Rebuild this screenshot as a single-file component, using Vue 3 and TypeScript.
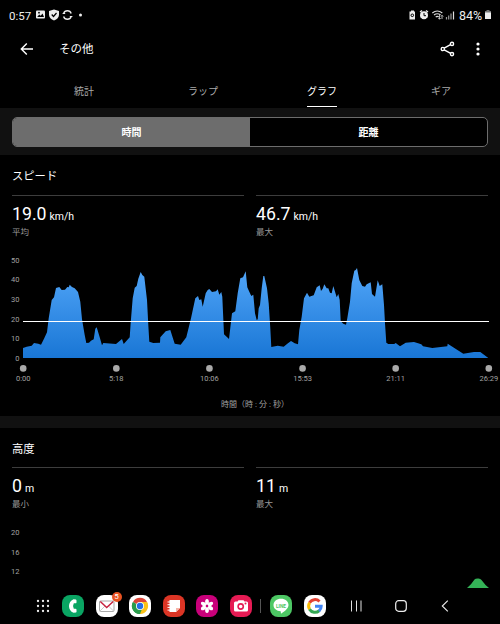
<template>
  <div class="screen">
    <header class="status-bar">
      <span class="clock">0:57</span>
      <svg class="status-left" width="52" height="12" viewBox="0 0 52 12">
        <rect x="0" y="1.5" width="9" height="8" rx="1" fill="#eee" />
        <path d="M1.2 8l2-2.5 1.5 1.3L6.500 4.500 8 8z" fill="#000" />
        <circle cx="3" cy="3.700" r=".9" fill="#000" />
        <path d="M18 .6l5 1.500v3.600c0 2.700-2 4.500-5 5.700-3-1.200-5-3-5-5.700V2.100z" fill="#eee" />
        <path d="M15.700 5.500l1.800 2 3-3.500" fill="none" stroke="#000" stroke-width="1.200" />
        <path d="M27.600 4.500a4 4 0 0 1 7.600 0M35.200 7.500a4 4 0 0 1-7.600 0" fill="none" stroke="#eee" stroke-width="1.300" />
        <path d="M26.600 4.500h2.600M33.800 7.500h2.600" stroke="#eee" stroke-width="1" />
        <circle cx="44.500" cy="6" r="1.500" fill="#eee" />
      </svg>
      <svg class="status-right" width="46" height="12" viewBox="0 0 46 12">
        <path d="M2 1.500h3v1h1v8H.500v-8H2z" fill="#eee" />
        <circle cx="3.300" cy="6.300" r="1.300" fill="none" stroke="#000" />
        <path d="M11 3l2-1.500M19 3l-2-1.500" stroke="#eee" stroke-width="1.300" />
        <circle cx="15" cy="6.300" r="4" fill="#eee" />
        <path d="M15 4v2.700h2M11.500 10.500l1-1M18.500 10.500l-1-1" fill="none" stroke="#000" />
        <path d="M23.300 4q5-4 10 0M25 6q3.300-2.600 6.600 0M26.700 8q1.600-1.300 3 0" fill="none" stroke="#ddd" stroke-width="1.100" />
        <path d="M30.500 6v4M29.300 9l1.200 1.300L31.700 9M33 10V6.500M31.900 7.500L33 6.300l1.200 1.200" fill="none" stroke="#ddd" stroke-width=".8" />
        <path d="M37.500 8v2.500M39.700 6.500v4M42 4.500v6" stroke="#999" stroke-width="1.200" />
        <path d="M44.500 2.500v8" stroke="#ddd" stroke-width="1.200" />
      </svg>
      <span class="percent">84%</span>
      <svg class="battery" width="6" height="10" viewBox="0 0 6 10">
        <path d="M1.500 0h3v1H6v2H0V1h1.500z" fill="#777" />
        <path d="M0 2.500h6V9H0z" fill="#eee" />
      </svg>
    </header>

    <div class="app-bar">
      <svg width="14" height="14" viewBox="0 0 14 14" fill="none" stroke="#fff" stroke-width="1.400">
        <path d="M13 7H1.700M6.800 1.500L1.300 7l5.500 5.500" />
      </svg>
      <h1>その他</h1>
      <svg class="share" width="16" height="16" viewBox="0 0 16 16" fill="none" stroke="#fff" stroke-width="1.400">
        <path d="M4.200 7.200L10.500 3.700M4.200 8.800l6.500 3.600" />
        <circle cx="2.800" cy="8" r="1.600" />
        <circle cx="12" cy="2.900" r="1.600" />
        <circle cx="12" cy="13.100" r="1.600" />
      </svg>
      <svg width="4" height="14" viewBox="0 0 4 14" fill="#fff">
        <circle cx="2" cy="2" r="1.600" /><circle cx="2" cy="7" r="1.600" /><circle cx="2" cy="12" r="1.600" />
      </svg>
    </div>

    <nav class="tabs">
      <button v-for="tab in tabs" :key="tab" :class="{ active: tab === activeTab }" @click="activeTab = tab">
        <span>{{ tab }}</span>
      </button>
    </nav>

    <div class="mode-band">
      <div class="segmented">
        <button v-for="mode in modes" :key="mode" :class="{ selected: mode === activeMode }" @click="activeMode = mode">
          {{ mode }}
        </button>
      </div>
    </div>

    <section v-for="metric in metrics" :key="metric.title" class="metric" :class="metric.kind">
      <h2>{{ metric.title }}</h2>
      <div class="stats">
        <div v-for="stat in metric.stats" :key="stat.label" class="stat">
          <p class="reading">{{ stat.value }}<small>{{ metric.unit }}</small></p>
          <p class="label">{{ stat.label }}</p>
        </div>
      </div>

      <svg v-if="metric.kind === 'speed'" class="chart" width="500" height="166" viewBox="0 0 500 166">
        <defs>
          <linearGradient id="speed-fill" x1="0" y1="18" x2="0" y2="108" gradientUnits="userSpaceOnUse">
            <stop offset="0" stop-color="#51a5f8" />
            <stop offset="1" stop-color="#1976d5" />
          </linearGradient>
        </defs>
        <path :d="speedPath" fill="url(#speed-fill)" />
        <path d="M23 71.500h466" stroke="#fff" />
        <text v-for="(n, i) in [50, 40, 30, 20, 10, 0]" :key="n" x="19.500" :y="12.800 + i * 19.600" text-anchor="end">{{ n }}</text>
        <g v-for="(time, i) in times" :key="time">
          <circle :cx="23.200 + i * 93.120" cy="118.400" r="3.300" fill="#aaa" />
          <text :x="23.200 + i * 93.120" y="130.800" text-anchor="middle">{{ time }}</text>
        </g>
        <text class="axis-title" x="255" y="157" text-anchor="middle">時間（時 : 分 : 秒）</text>
      </svg>

      <svg v-else class="chart" width="500" height="66" viewBox="0 0 500 66">
        <path d="M467 66q4-3 7.500-8.500 1-1.200 4-1 2 0 3 1.500Q485 63 489 66z" fill="#34b257" />
        <text v-for="(n, i) in [20, 16, 12]" :key="n" x="19.500" :y="13 + i * 19.600" text-anchor="end">{{ n }}</text>
      </svg>
    </section>

    <footer class="dock">
      <svg class="apps" width="14" height="14" viewBox="0 0 14 14" fill="#eee">
        <template v-for="row in 3" :key="row">
          <circle v-for="col in 3" :key="col" :cx="col * 5 - 3" :cy="row * 5 - 3" r="1.150" />
        </template>
      </svg>
      <div class="app phone">
        <svg viewBox="0 0 22 22">
          <path d="M11.500 4.200l2.500.2q.8.500.5 3-.2.900-1 .900h-1.700q-1.500 2.700 0 5.400h1.700q.8 0 1 .9.300 2.500-.5 3l-2.500.2C5.500 15.500 5.500 6.500 11.500 4.200z" fill="#fff" />
        </svg>
      </div>
      <div class="app mail">
        <svg viewBox="0 0 22 22" fill="none">
          <rect x="3.500" y="6" width="14.500" height="10.500" rx="1" stroke="#aaa" />
          <path d="M4 16l5-5M17.500 16l-5-5" stroke="#bbb" stroke-width=".8" />
          <path d="M4.300 6.500l6.400 6 6.500-6" stroke="#c7213e" stroke-width="1.400" />
        </svg>
        <span class="badge">5</span>
      </div>
      <div class="app chrome">
        <svg viewBox="0 0 22 22">
          <path d="M11 11L4 7A8 8 0 0 1 18 7z" fill="#dc4437" />
          <path d="M11 11L18 7a8 8 0 0 1-7 12z" fill="#fbc116" />
          <path d="M11 11v8A8 8 0 0 1 4 7z" fill="#2a9b4b" />
          <path d="M11 7h7l.6 1.500L14 13l-3 6-2-4z" fill="#fbc116" />
          <path d="M4 7l4 6 5 1-2 5A8 8 0 0 1 4 7z" fill="#2a9b4b" />
          <circle cx="11" cy="11" r="4" fill="#fff" />
          <circle cx="11" cy="11" r="3.200" fill="#246ee5" />
        </svg>
      </div>
      <div class="app notes">
        <svg viewBox="0 0 22 22">
          <path d="M6.500 5H17v8l-4 4H6.500z" fill="#fff" />
          <path d="M17 13h-4v4" fill="#f5b5a9" />
          <path d="M4.500 7h3M4.500 9.700h3M4.500 12.400h3M4.500 15.100h3" stroke="#fff" stroke-width="1" />
        </svg>
      </div>
      <div class="app gallery">
        <svg viewBox="0 0 22 22" fill="#fff">
          <ellipse v-for="n in 6" :key="n" cx="11" cy="7" rx="1.900" ry="2.900" :transform="`rotate(${n * 60} 11 11)`" />
          <circle cx="11" cy="11" r="1.200" fill="#c9007a" />
        </svg>
      </div>
      <div class="app camera">
        <svg viewBox="0 0 22 22">
          <path d="M5.500 6.500h2l1-1.300h5l1 1.300h2q1.500 0 1.500 1.500v7q0 1.500-1.500 1.500h-11Q4 16.500 4 15V8q0-1.500 1.500-1.500z" fill="#fff" />
          <circle cx="10.700" cy="11.500" r="2.600" fill="none" stroke="#e61b54" stroke-width="1.600" />
          <circle cx="15.500" cy="8.500" r="1" fill="#e61b54" />
        </svg>
      </div>
      <i class="divider"></i>
      <div class="app line">
        <svg viewBox="0 0 22 22">
          <path d="M11 3.800c4.300 0 7.500 2.700 7.500 6.200 0 3-2.800 5.700-7.500 8.700l-.3-2.500C6.500 16 3.500 13.500 3.500 10S6.700 3.800 11 3.800z" fill="#fff" />
          <text x="11" y="12.600" text-anchor="middle">LINE</text>
        </svg>
      </div>
      <div class="app google">
        <svg viewBox="0 0 22 22" fill="none" stroke-width="3">
          <path d="M5.500 7.800A6.300 6.300 0 0 1 15.500 6.500" stroke="#e34133" />
          <path d="M5.600 14.300a6.300 6.300 0 0 1 0-6.600" stroke="#fbbc05" />
          <path d="M15.300 15.600a6.300 6.300 0 0 1-9.800-1.400" stroke="#34a853" />
          <path d="M11 11.300h6.200a6.300 6.300 0 0 1-2.200 4.700" stroke="#4285f4" />
        </svg>
      </div>
      <svg class="recents" width="12" height="12" viewBox="0 0 12 12">
        <path d="M1.500 .500v11M6.500 .500v11" stroke="#ddd" />
        <path d="M11 .500v11" stroke="#999" stroke-width="1.500" />
      </svg>
      <svg class="home" width="12" height="12" viewBox="0 0 12 12">
        <rect x=".7" y=".7" width="10.600" height="10.600" rx="3" fill="none" stroke="#eee" stroke-width="1.200" />
      </svg>
      <svg class="back" width="8" height="12" viewBox="0 0 8 12">
        <path d="M6.800 .700L1.300 6l5.500 5.300" fill="none" stroke="#eee" stroke-width="1.100" />
      </svg>
    </footer>
  </div>
</template>

<script setup lang="ts">
import { computed, ref } from 'vue';

interface Metric {
  kind: 'speed' | 'altitude';
  title: string;
  unit: string;
  stats: { value: string; label: string }[];
}

const tabs = ['統計', 'ラップ', 'グラフ', 'ギア'];
const activeTab = ref('グラフ');

const modes = ['時間', '距離'];
const activeMode = ref('時間');

const metrics: Metric[] = [
  {
    kind: 'speed',
    title: 'スピード',
    unit: 'km/h',
    stats: [
      { value: '19.0', label: '平均' },
      { value: '46.7', label: '最大' }
    ]
  },
  {
    kind: 'altitude',
    title: '高度',
    unit: 'm',
    stats: [
      { value: '0', label: '最小' },
      { value: '11', label: '最大' }
    ]
  }
];

const times = ['0:00', '5:18', '10:06', '15:53', '21:11', '26:29'];

// x, y in thirds of a pixel
const speedPoints: [number, number][] = [
  [69, 294], [80, 290], [95, 287], [102, 279], [115, 281], [123, 284], [132, 266], [141, 247],
  [146, 205], [155, 150], [162, 142], [168, 114], [178, 111], [185, 120], [195, 119], [202, 111],
  [206, 112], [209, 104], [216, 111], [224, 115], [234, 126], [241, 155], [246, 208], [254, 255],
  [259, 279], [267, 278], [273, 272], [281, 268], [286, 236], [290, 232], [299, 262], [306, 286],
  [310, 279], [348, 282], [366, 267], [371, 282], [389, 262], [392, 218], [398, 145], [404, 113],
  [410, 108], [415, 86], [422, 66], [427, 75], [433, 80], [441, 150], [445, 225], [448, 275],
  [460, 279], [480, 278], [481, 262], [497, 244], [511, 240], [524, 281], [542, 284], [559, 262],
  [573, 205], [586, 145], [594, 138], [598, 150], [604, 148], [608, 170], [617, 130], [623, 120],
  [628, 117], [636, 126], [648, 124], [653, 118], [658, 134], [664, 126], [667, 140], [672, 253],
  [687, 267], [696, 190], [706, 184], [713, 130], [721, 85], [729, 82], [737, 64], [742, 112],
  [748, 125], [754, 138], [760, 134], [765, 190], [770, 210], [773, 208], [776, 175], [780, 165],
  [785, 115], [790, 78], [793, 78], [801, 115], [806, 160], [811, 235], [814, 291], [833, 287],
  [851, 290], [862, 281], [873, 273], [884, 280], [894, 283], [898, 240], [905, 200], [912, 145],
  [921, 128], [928, 140], [941, 136], [950, 112], [959, 106], [963, 123], [968, 116], [973, 103],
  [980, 115], [985, 115], [990, 128], [995, 130], [1000, 108], [1010, 142], [1015, 132], [1019, 150],
  [1022, 214], [1030, 221], [1038, 224], [1042, 205], [1050, 155], [1055, 100], [1063, 62], [1067, 60],
  [1071, 54], [1078, 90], [1087, 108], [1095, 110], [1100, 103], [1112, 97], [1116, 132], [1125, 140],
  [1133, 91], [1139, 108], [1147, 103], [1152, 165], [1155, 220], [1159, 278], [1165, 282], [1183, 282],
  [1187, 279], [1200, 289], [1217, 278], [1242, 276], [1264, 283], [1269, 289], [1297, 294], [1342, 289],
  [1343, 281], [1390, 311], [1422, 306], [1441, 306], [1464, 323]
];

const speedPath = computed(() => {
  const line = speedPoints.map(([x, y]) => `${(x / 3).toFixed(1)} ${(y / 3).toFixed(1)}`).join('L');
  return `M23 108L${line}V108Z`;
});
</script>

<style>
body {
  margin: 0;
  background: #000;
}
</style>

<style scoped>
.screen {
  width: 500px;
  height: 624px;
  display: flex;
  flex-direction: column;
  overflow: hidden;
  background: #000;
  color: #fff;
  font-family: Roboto, 'Noto Sans CJK JP', sans-serif;
}

.screen svg {
  display: block;
  flex: none;
}

h1, h2, p {
  margin: 0;
  font-weight: 400;
}

button {
  border: 0;
  padding: 0;
  background: none;
  color: inherit;
  font: inherit;
}

.status-bar {
  height: 30px;
  flex: none;
  display: flex;
  align-items: center;
  padding: 0 9px;
  color: #eee;
}

.clock {
  width: 27px;
  font-size: 11.5px;
  line-height: 16px;
  padding-top: 1px;
}

.status-right {
  margin-left: auto;
}

.percent {
  width: 25px;
  margin-left: 4px;
  padding-top: 1px;
  font-size: 12.5px;
  line-height: 16px;
}

.battery {
  margin-left: 1px;
}

.app-bar {
  height: 37px;
  flex: none;
  display: flex;
  align-items: center;
  padding: 0 20px;
}

.app-bar h1 {
  margin-left: 25px;
  padding-top: 1px;
  font-size: 11.5px;
  line-height: 20px;
}

.share {
  margin-left: auto;
  margin-right: 20px;
}

.tabs {
  height: 41px;
  flex: none;
  display: flex;
  padding-left: 24.5px;
  width: 476px;
}

.tabs button {
  flex: 1;
  display: flex;
  justify-content: center;
  color: #aaa;
  font-size: 10px;
}

.tabs span {
  height: 39px;
  line-height: 49px;
  border-bottom: 1px solid transparent;
}

.tabs .active {
  color: #fff;
}

.tabs .active span {
  border-color: #fff;
}

.mode-band {
  height: 47px;
  flex: none;
  box-sizing: border-box;
  padding: 9px 12px;
  background: #111;
}

.segmented {
  height: 30px;
  box-sizing: border-box;
  display: flex;
  overflow: hidden;
  border: 1px solid #6d6d6d;
  border-radius: 5px;
  background: #000;
}

.segmented button {
  flex: 1;
  padding-bottom: 2px;
  font-size: 10px;
  font-weight: 700;
}

.segmented .selected {
  background: #6d6d6d;
}

.metric {
  flex: none;
  overflow: hidden;
}

.metric.speed {
  height: 261px;
  border-bottom: 12px solid #111;
}

.metric.altitude {
  height: 160px;
}

.metric h2 {
  height: 40px;
  padding-left: 12px;
  font-size: 11.3px;
  line-height: 43px;
}

.metric.altitude h2 {
  height: 39px;
}

.stats {
  height: 55px;
  display: flex;
  gap: 12px;
  padding: 0 12px;
}

.stat {
  flex: 1;
  border-top: 1px solid #3d3d3d;
}

.reading {
  height: 28px;
  font-size: 17.7px;
  line-height: 36px;
}

.reading small {
  margin-left: 3px;
  font-size: 10.5px;
}

.label {
  font-size: 8.5px;
  line-height: 17px;
  color: #999;
}

.chart text {
  fill: #a2a2a2;
  font-size: 7.5px;
}

.chart .axis-title {
  font-size: 8px;
}

.dock {
  height: 36px;
  flex: none;
  display: flex;
  align-items: center;
  padding-left: 36px;
}

.app {
  position: relative;
  width: 22px;
  height: 22px;
  flex: none;
  margin-right: 11.6px;
  border-radius: 8px;
}

.apps {
  margin-right: 12px;
}

.phone { background: #0aa563; }
.mail, .chrome, .google { background: #fff; }
.notes { background: #dc3525; }
.gallery { background: #c9007a; }
.camera { background: #e61b54; }
.line { background: #4dc764; }

.badge {
  position: absolute;
  top: -3px;
  right: -4px;
  width: 10px;
  height: 10px;
  border-radius: 50%;
  background: #e85321;
  font-size: 8px;
  line-height: 10px;
  text-align: center;
}

.camera {
  margin-right: 8px;
}

.divider {
  width: 1px;
  height: 14px;
  margin-right: 9px;
  background: #555;
}

.line text {
  fill: #4dc764;
  font-size: 4.8px;
  font-weight: 700;
}

.google {
  margin-right: 24.5px;
}

.home {
  margin-left: 33px;
}

.back {
  margin-left: 34px;
}
</style>
